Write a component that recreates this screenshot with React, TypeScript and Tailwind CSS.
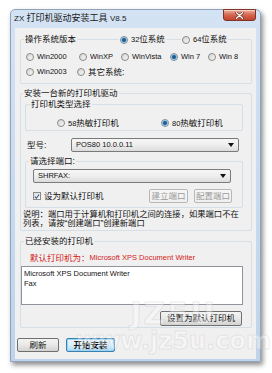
import React from "react";

const Radio = ({ checked = false }: { checked?: boolean }) => (
  <span className="flex h-[8px] w-[8px] shrink-0 items-center justify-center rounded-full border border-[#8a8a8a] bg-linear-to-br from-[#d4d4d4] to-[#f8f8f8]">
    {checked && <span className="h-[4px] w-[4px] rounded-full bg-[#1f5d8c] shadow-[0_0_1px_1px_#7fb8e6]" />}
  </span>
);

const RadioItem = ({ checked, children, w }: { checked?: boolean; children: React.ReactNode; w: string }) => (
  <span className={`flex shrink-0 items-center gap-[3px] ${w}`}>
    <Radio checked={checked} />
    <span className="whitespace-nowrap">{children}</span>
  </span>
);

const Combo = ({ text, w }: { text: string; w: string }) => (
  <div className={`flex h-[14px] items-center justify-between rounded-[2px] border border-[#7a7a7a] bg-linear-to-b from-[#f6f6f6] via-[#eeeeee] to-[#dcdcdc] pl-[4px] pr-[4px] ${w}`}>
    <span className="text-[7.5px] leading-none text-[#111]">{text}</span>
    <svg width="6" height="4" viewBox="0 0 6 4">
      <path d="M0 0h6L3 4z" fill="#111" />
    </svg>
  </div>
);

const Btn = ({ children, w, h = "h-[14px]", disabled = false, primary = false }: { children: React.ReactNode; w: string; h?: string; disabled?: boolean; primary?: boolean }) => {
  let cls = "border-[#707070] from-[#f3f3f3] via-[#e8e8e8] to-[#d2d2d2] text-[#111]";
  if (disabled) cls = "border-[#b4b8bb] from-[#f6f6f6] to-[#f0f0f0] text-[#9a9a9a]";
  if (primary) cls = "border-[#3c7fb1] from-[#eaf6fd] via-[#d9f0fc] to-[#a9dbf6] text-[#111] font-bold shadow-[inset_0_0_0_1px_#9ad4f5]";
  return (
    <div className={`flex shrink-0 items-center justify-center rounded-[2px] border bg-linear-to-b text-[8.5px] leading-none ${cls} ${w} ${h}`}>
      {children}
    </div>
  );
};

export default function App() {
  return (
    <div className="h-[373px] w-[272px] bg-white font-['Liberation_Sans','Noto_Sans_CJK_SC',sans-serif] text-[#111]">
      <div className="relative ml-[10px] pt-[9px]">
        <div className="flex h-[353px] w-[251px] flex-col rounded-t-[5px] border border-[#8fa3bb] bg-linear-to-b from-[#d4e3f4] to-[#bfd3ea] shadow-[2px_3px_5px_rgba(0,0,0,0.45)]">
          {/* title bar */}
          <div className="flex h-[18px] items-start justify-between">
            <span className="mt-[3px] ml-[3px] whitespace-nowrap text-[9px] leading-[10px] text-[#1a1a1a]">
              <span className="text-[8px]">ZX </span>打印机驱动安装工具 <span className="text-[8px]">V8.5</span>
            </span>
            <div className="mr-[4px] -mt-[1px] flex h-[12px] w-[33px] items-center justify-center rounded-b-[3px] border border-[#7e3426] bg-linear-to-b from-[#eab0a2] via-[#d5654e] to-[#c2432d] shadow-[inset_0_1px_0_#f6d0c6]">
              <svg width="9" height="7" viewBox="0 0 9 7">
                <path d="M1.5 0.8L7.5 6.2M7.5 0.8L1.5 6.2" stroke="#5a1d12" strokeWidth="2.6" strokeLinecap="round" />
                <path d="M1.5 0.8L7.5 6.2M7.5 0.8L1.5 6.2" stroke="#fff" strokeWidth="1.5" strokeLinecap="round" />
              </svg>
            </div>
          </div>

          {/* client */}
          <div className="mx-[4px] flex h-[331px] flex-col bg-[#f0f0f0] pl-[5px] pr-[4px] text-[8.5px] leading-none">
            {/* group 1 */}
            <div className="mt-[11px] flex flex-col rounded-[2px] border border-[#d5dfe5] pb-[5px]">
              <div className="-mt-[6px] flex h-[11px] items-center">
                <span className="w-[98px] shrink-0">
                  <span className="ml-[3px] bg-[#f0f0f0] px-[1px]">操作系统版本</span>
                </span>
                <span className="flex w-[62px] shrink-0">
                  <span className="bg-[#f0f0f0] px-[1px]">
                    <RadioItem checked w="">
                      <span className="text-[7.5px]">32</span>位系统
                    </RadioItem>
                  </span>
                </span>
                <span className="bg-[#f0f0f0] px-[1px]">
                  <RadioItem w="">
                    <span className="text-[7.5px]">64</span>位系统
                  </RadioItem>
                </span>
              </div>
              <div className="mt-[6px] flex h-[12px] items-center pl-[5px] text-[7.5px]">
                <RadioItem w="w-[53px]">Win2000</RadioItem>
                <RadioItem w="w-[42px]">WinXP</RadioItem>
                <RadioItem w="w-[49px]">WinVista</RadioItem>
                <RadioItem checked w="w-[38px]">Win 7</RadioItem>
                <RadioItem w="">Win 8</RadioItem>
              </div>
              <div className="mt-[3px] flex h-[12px] items-center pl-[5px] text-[7.5px]">
                <RadioItem w="w-[51px]">Win2003</RadioItem>
                <RadioItem w="">
                  <span className="text-[8.5px]">其它系统:</span>
                </RadioItem>
              </div>
            </div>

            {/* group 2 */}
            <div className="mt-[9px] flex flex-col rounded-[2px] border border-[#d5dfe5] pb-[2px]">
              <div className="-mt-[6px] flex h-[11px] items-center">
                <span className="ml-[2px] bg-[#f0f0f0] px-[1px]">安装一台新的打印机驱动</span>
              </div>

              <div className="mt-[5px] mr-[8px] ml-[4px] flex flex-col rounded-[2px] border border-[#d5dfe5] pb-[2px]">
                <div className="-mt-[6px] flex h-[11px] items-center">
                  <span className="ml-[4px] bg-[#f0f0f0] px-[1px]">打印机类型选择</span>
                </div>
                <div className="mt-[8px] flex h-[10px] items-center pl-[31px]">
                  <RadioItem w="w-[104px]">
                    <span className="text-[7.5px]">58</span>热敏打印机
                  </RadioItem>
                  <RadioItem checked w="">
                    <span className="text-[7.5px]">80</span>热敏打印机
                  </RadioItem>
                </div>
              </div>

              <div className="mt-[7px] flex items-center pl-[6px]">
                <span className="w-[44px] shrink-0">型号:</span>
                <Combo text="POS80 10.0.0.11" w="w-[168px]" />
              </div>

              <div className="mt-[9px] mr-[8px] ml-[4px] flex flex-col rounded-[2px] border border-[#d5dfe5] pr-[10px] pb-[4px] pl-[7px]">
                <div className="-mt-[6px] -ml-[7px] flex h-[11px] items-center">
                  <span className="ml-[3px] bg-[#f0f0f0] px-[1px]">请选择端口:</span>
                </div>
                <div className="mt-[2px]">
                  <Combo text="SHRFAX:" w="w-[198px]" />
                </div>
                <div className="mt-[6px] flex h-[14px] items-center">
                  <span className="flex h-[8px] w-[8px] items-center justify-center border border-[#8a8a8a] bg-linear-to-br from-[#dcdcdc] to-[#fafafa]">
                    <svg width="7" height="7" viewBox="0 0 7 7">
                      <path d="M1 3.6L2.8 5.5L6 1.2" fill="none" stroke="#3b4f8a" strokeWidth="1.3" />
                    </svg>
                  </span>
                  <span className="ml-[3px]">设为默认打印机</span>
                  <div className="ml-auto flex gap-[6px]">
                    <Btn w="w-[39px]" disabled>建立端口</Btn>
                    <Btn w="w-[38px]" disabled>配置端口</Btn>
                  </div>
                </div>
              </div>

              <div className="mt-[2px] pl-[2px] text-[8.3px] leading-[9px] whitespace-nowrap">
                说明：端口用于计算机和打印机之间的连接，如果端口不在
                <br />
                列表，请按“创建端口”创建新端口
              </div>
            </div>

            {/* group 3 */}
            <div className="relative mt-[10px] flex flex-col rounded-[2px] border border-[#d5dfe5] pb-[1px]">
              <div className="-mt-[6px] flex h-[11px] items-center">
                <span className="ml-[3px] bg-[#f0f0f0] px-[1px]">已经安装的打印机</span>
              </div>
              <div className="mt-[6px] flex h-[10px] items-center pl-[9px] text-[#d42020]">
                默认打印机为：<span className="text-[7.5px]">Microsoft XPS Document Writer</span>
              </div>
              <div className="mt-[3px] mr-[8px] h-[39px] border border-[#8f939b] bg-white pt-[2px] pl-[2px] text-[7.5px] leading-[10px]">
                <div>Microsoft XPS Document Writer</div>
                <div>Fax</div>
              </div>
              <div className="mt-[6px] mr-[9px] self-end">
                <Btn w="w-[82px]" h="h-[15px]">设置为默认打印机</Btn>
              </div>
              {/* watermark */}
              <div className="pointer-events-none absolute top-[57px] left-[55px] flex flex-col items-center font-['DejaVu_Sans',sans-serif] font-bold leading-none text-white/35 [-webkit-text-stroke:1px_rgba(190,190,190,0.3)]">
                <span className="text-[30px] tracking-[2px]">JZ5U</span>
                <span className="text-[24px]">www.jz5u.com</span>
              </div>
            </div>

            {/* bottom buttons */}
            <div className="mt-[10px] -ml-[3px] flex gap-[7px]">
              <Btn w="w-[42px]">刷新</Btn>
              <Btn w="w-[49px]" primary>开始安装</Btn>
            </div>
          </div>
        </div>
      </div>
    </div>
  );
}
